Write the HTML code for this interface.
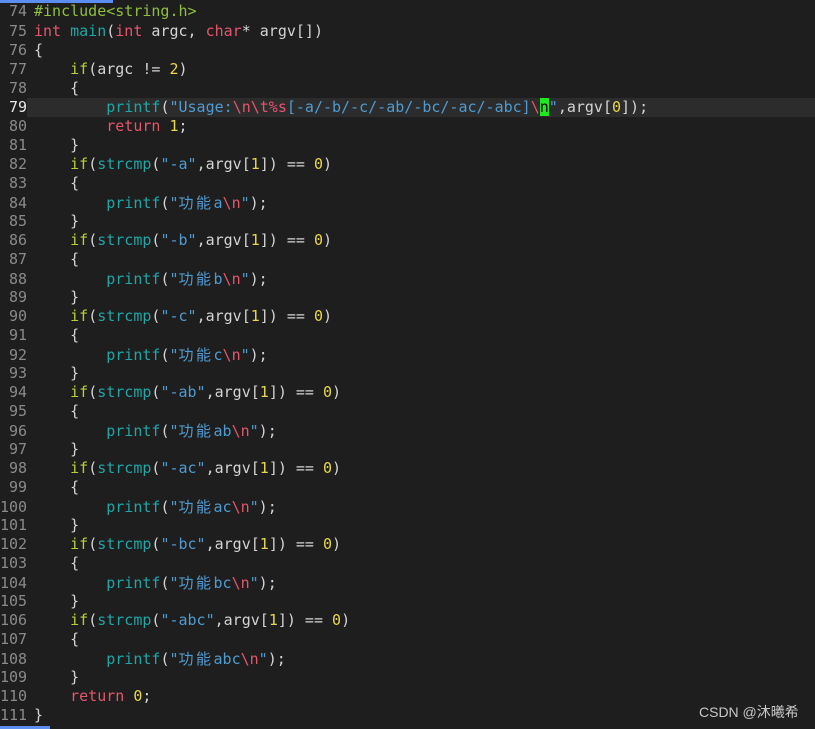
<!DOCTYPE html>
<html><head><meta charset="utf-8"><style>
html,body{margin:0;padding:0;background:#1e1e1e;width:815px;height:729px;overflow:hidden}
body{position:relative;font-family:"DejaVu Sans Mono","Liberation Mono","Noto Sans CJK SC",monospace;font-size:15px;color:#d4d4d4}
.l{position:absolute;left:0;height:19px;line-height:19px;white-space:pre;width:815px}
.n{display:inline-block;width:27px;text-align:right;color:#8a8a8a;margin-right:7px}
.cur{background:#2c2c2c}
.cur .n{color:#e8e8e8}
.k{color:#e5566d}.f{color:#1fa6a6}.s{color:#4f9bd0}.e{color:#e5566d}.d{color:#e8d84a}.y{color:#b5cf3a}.g{color:#8fbf3c}
.cj{font-family:"Noto Sans CJK SC",sans-serif;font-size:15px;letter-spacing:2.5px}
.hl{background:#1ee81e;color:#000}
</style></head><body>
<div style="position:absolute;left:0;top:0;width:113px;height:3px;background:#5b8ef0"></div>
<div style="position:absolute;left:0;top:726px;width:50px;height:3px;background:#5b8ef0"></div>
<div class="l" style="top:2px"><span class="n">74</span><span class="g">#include&lt;string.h&gt;</span></div>
<div class="l" style="top:22px"><span class="n">75</span><span class="k">int</span> <span class="f">main</span>(<span class="k">int</span> argc, <span class="k">char</span>* argv[])</div>
<div class="l" style="top:41px"><span class="n">76</span>{</div>
<div class="l" style="top:60px"><span class="n">77</span>    <span class="y">if</span>(argc != <span class="d">2</span>)</div>
<div class="l" style="top:79px"><span class="n">78</span>    {</div>
<div class="l cur" style="top:98px"><span class="n" style="background:#1e1e1e">79</span>        <span class="f">printf</span>(<span class="s">"Usage:</span><span class="e">\n\t%s</span><span class="s">[-a/-b/-c/-ab/-bc/-ac/-abc]</span><span class="e">\</span><span class="hl">n</span><span class="s">"</span>,argv[<span class="d">0</span>]);</div>
<div class="l" style="top:117px"><span class="n">80</span>        <span class="k">return</span> <span class="d">1</span>;</div>
<div class="l" style="top:136px"><span class="n">81</span>    }</div>
<div class="l" style="top:155px"><span class="n">82</span>    <span class="y">if</span>(<span class="f">strcmp</span>(<span class="s">"-a"</span>,argv[<span class="d">1</span>]) == <span class="d">0</span>)</div>
<div class="l" style="top:174px"><span class="n">83</span>    {</div>
<div class="l" style="top:193px"><span class="n">84</span>        <span class="f">printf</span>(<span class="s">"<span class="cj">功能</span>a</span><span class="e">\n</span><span class="s">"</span>);</div>
<div class="l" style="top:212px"><span class="n">85</span>    }</div>
<div class="l" style="top:231px"><span class="n">86</span>    <span class="y">if</span>(<span class="f">strcmp</span>(<span class="s">"-b"</span>,argv[<span class="d">1</span>]) == <span class="d">0</span>)</div>
<div class="l" style="top:250px"><span class="n">87</span>    {</div>
<div class="l" style="top:269px"><span class="n">88</span>        <span class="f">printf</span>(<span class="s">"<span class="cj">功能</span>b</span><span class="e">\n</span><span class="s">"</span>);</div>
<div class="l" style="top:288px"><span class="n">89</span>    }</div>
<div class="l" style="top:307px"><span class="n">90</span>    <span class="y">if</span>(<span class="f">strcmp</span>(<span class="s">"-c"</span>,argv[<span class="d">1</span>]) == <span class="d">0</span>)</div>
<div class="l" style="top:326px"><span class="n">91</span>    {</div>
<div class="l" style="top:345px"><span class="n">92</span>        <span class="f">printf</span>(<span class="s">"<span class="cj">功能</span>c</span><span class="e">\n</span><span class="s">"</span>);</div>
<div class="l" style="top:364px"><span class="n">93</span>    }</div>
<div class="l" style="top:383px"><span class="n">94</span>    <span class="y">if</span>(<span class="f">strcmp</span>(<span class="s">"-ab"</span>,argv[<span class="d">1</span>]) == <span class="d">0</span>)</div>
<div class="l" style="top:402px"><span class="n">95</span>    {</div>
<div class="l" style="top:421px"><span class="n">96</span>        <span class="f">printf</span>(<span class="s">"<span class="cj">功能</span>ab</span><span class="e">\n</span><span class="s">"</span>);</div>
<div class="l" style="top:440px"><span class="n">97</span>    }</div>
<div class="l" style="top:459px"><span class="n">98</span>    <span class="y">if</span>(<span class="f">strcmp</span>(<span class="s">"-ac"</span>,argv[<span class="d">1</span>]) == <span class="d">0</span>)</div>
<div class="l" style="top:478px"><span class="n">99</span>    {</div>
<div class="l" style="top:497px"><span class="n">100</span>        <span class="f">printf</span>(<span class="s">"<span class="cj">功能</span>ac</span><span class="e">\n</span><span class="s">"</span>);</div>
<div class="l" style="top:516px"><span class="n">101</span>    }</div>
<div class="l" style="top:535px"><span class="n">102</span>    <span class="y">if</span>(<span class="f">strcmp</span>(<span class="s">"-bc"</span>,argv[<span class="d">1</span>]) == <span class="d">0</span>)</div>
<div class="l" style="top:554px"><span class="n">103</span>    {</div>
<div class="l" style="top:573px"><span class="n">104</span>        <span class="f">printf</span>(<span class="s">"<span class="cj">功能</span>bc</span><span class="e">\n</span><span class="s">"</span>);</div>
<div class="l" style="top:592px"><span class="n">105</span>    }</div>
<div class="l" style="top:611px"><span class="n">106</span>    <span class="y">if</span>(<span class="f">strcmp</span>(<span class="s">"-abc"</span>,argv[<span class="d">1</span>]) == <span class="d">0</span>)</div>
<div class="l" style="top:630px"><span class="n">107</span>    {</div>
<div class="l" style="top:649px"><span class="n">108</span>        <span class="f">printf</span>(<span class="s">"<span class="cj">功能</span>abc</span><span class="e">\n</span><span class="s">"</span>);</div>
<div class="l" style="top:668px"><span class="n">109</span>    }</div>
<div class="l" style="top:687px"><span class="n">110</span>    <span class="k">return</span> <span class="d">0</span>;</div>
<div class="l" style="top:706px"><span class="n">111</span>}</div>
<div style="position:absolute;left:699px;top:702px;font-family:'Liberation Sans','Noto Sans CJK SC',sans-serif;font-size:14px;color:#c8c8c8">CSDN @沐曦希</div>
</body></html>
